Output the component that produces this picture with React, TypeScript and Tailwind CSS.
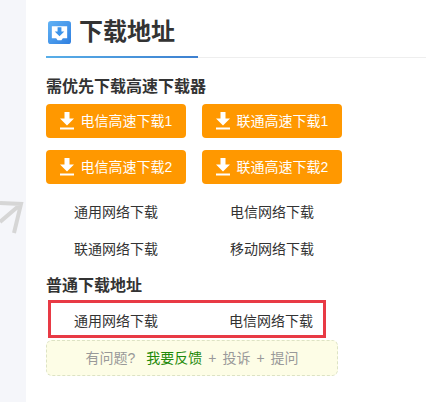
const FONT = "font-['Liberation_Sans','Noto_Sans_CJK_SC',sans-serif]";

function DownloadGlyph() {
  return (
    <svg width="14" height="18" viewBox="0 0 14 18" className="shrink-0">
      <path d="M4.500 0h5v6.500H14L7 13.500 0 6.500h4.500z" fill="#fff" />
      <rect x="0" y="15.500" width="14" height="2" fill="#fff" />
    </svg>
  );
}

function TitleIcon() {
  return (
    <svg width="23" height="23" viewBox="0 0 24 24" className="shrink-0">
      <defs>
        <linearGradient id="titleIcon" x1="0" y1="0" x2="1" y2="1">
          <stop offset="0" stopColor="#62b3f5" />
          <stop offset="1" stopColor="#2f7fe0" />
        </linearGradient>
      </defs>
      <rect x="0" y="0" width="24" height="24" rx="3" fill="url(#titleIcon)" />
      <path d="M4 5.500h16v12.500h-4.500l-1.500 2h-4l-1.500-2H4z" fill="#fff" />
      <path d="M10 6.500h4v4.500h3l-5 5-5-5h3z" fill="#3d94ea" />
    </svg>
  );
}

function OrangeButton({ label }: { label: string }) {
  return (
    <a className="flex h-[34px] w-[140px] items-center justify-center gap-[7px] rounded-[4px] bg-[#ff9800] text-[14px] text-white">
      <DownloadGlyph />
      <span>{label}</span>
    </a>
  );
}

function PlainLink({ label }: { label: string }) {
  return (
    <a className="flex h-[37px] w-[140px] items-center justify-center text-[14px] text-[#333]">
      {label}
    </a>
  );
}

export default function App() {
  const fast = ["电信高速下载1", "联通高速下载1", "电信高速下载2", "联通高速下载2"];
  const mirrors = ["通用网络下载", "电信网络下载", "联通网络下载", "移动网络下载"];

  return (
    <div className={`relative flex h-[402px] w-[426px] overflow-hidden bg-[#f5f6fa] ${FONT}`}>
      {/* background arrow cut off by the panel */}
      <svg width="26" height="70" viewBox="0 0 26 70" className="absolute left-0 top-[180px]">
        <path d="M0 42 L21 24 M0 23 L21 24 L14 53" fill="none" stroke="#d6d6d6" strokeWidth="4" />
      </svg>

      <div className="ml-[26px] flex-1 bg-white pl-5">
        {/* Header */}
        <div className="h-[58px] border-b border-[#eeeeee]">
          <div className="flex h-[58px] w-[152px] flex-col">
            <div className="flex flex-1 items-center gap-[8px] pl-[2px] pt-[9px]">
              <TitleIcon />
              <h2 className="-mt-px text-[24px] font-bold leading-none text-[#333]">下载地址</h2>
            </div>
            <div className="h-[2px] bg-gradient-to-r from-[#58aee8] to-[#3d80d0]" />
          </div>
        </div>

        <h3 className="mt-[18px] text-[16px] font-bold leading-[22px] text-[#333]">需优先下载高速下载器</h3>
        <div className="mt-[6px] grid w-[296px] grid-cols-[140px_140px] gap-x-4 gap-y-3">
          {fast.map((label) => (
            <OrangeButton key={label} label={label} />
          ))}
        </div>

        <div className="mt-[10px] grid w-[296px] grid-cols-[140px_140px] gap-x-4">
          {mirrors.map((label) => (
            <PlainLink key={label} label={label} />
          ))}
        </div>

        <h3 className="mt-[7px] text-[16px] font-bold leading-[22px] text-[#333]">普通下载地址</h3>
        <div className="ml-[2px] mt-[3px] grid h-[38px] w-[278px] grid-cols-[140px_140px] gap-x-4 border-[3px] border-[#e83a45]">
          <div className="-ml-[5px]">
            <PlainLink label="通用网络下载" />
          </div>
          <div className="-ml-[6px]">
            <PlainLink label="电信网络下载" />
          </div>
        </div>

        <div className="mt-[2px] flex h-[36px] w-[292px] items-center justify-center gap-[6px] rounded-[6px] border border-dashed border-[#dde3c4] bg-[#fdfde6] text-[14px] text-[#999]">
          <span className="mr-[5px]">有问题?</span>
          <span className="text-[#1f8a0a]">我要反馈</span>
          <span>+</span>
          <span>投诉</span>
          <span>+</span>
          <span>提问</span>
        </div>
      </div>
    </div>
  );
}
